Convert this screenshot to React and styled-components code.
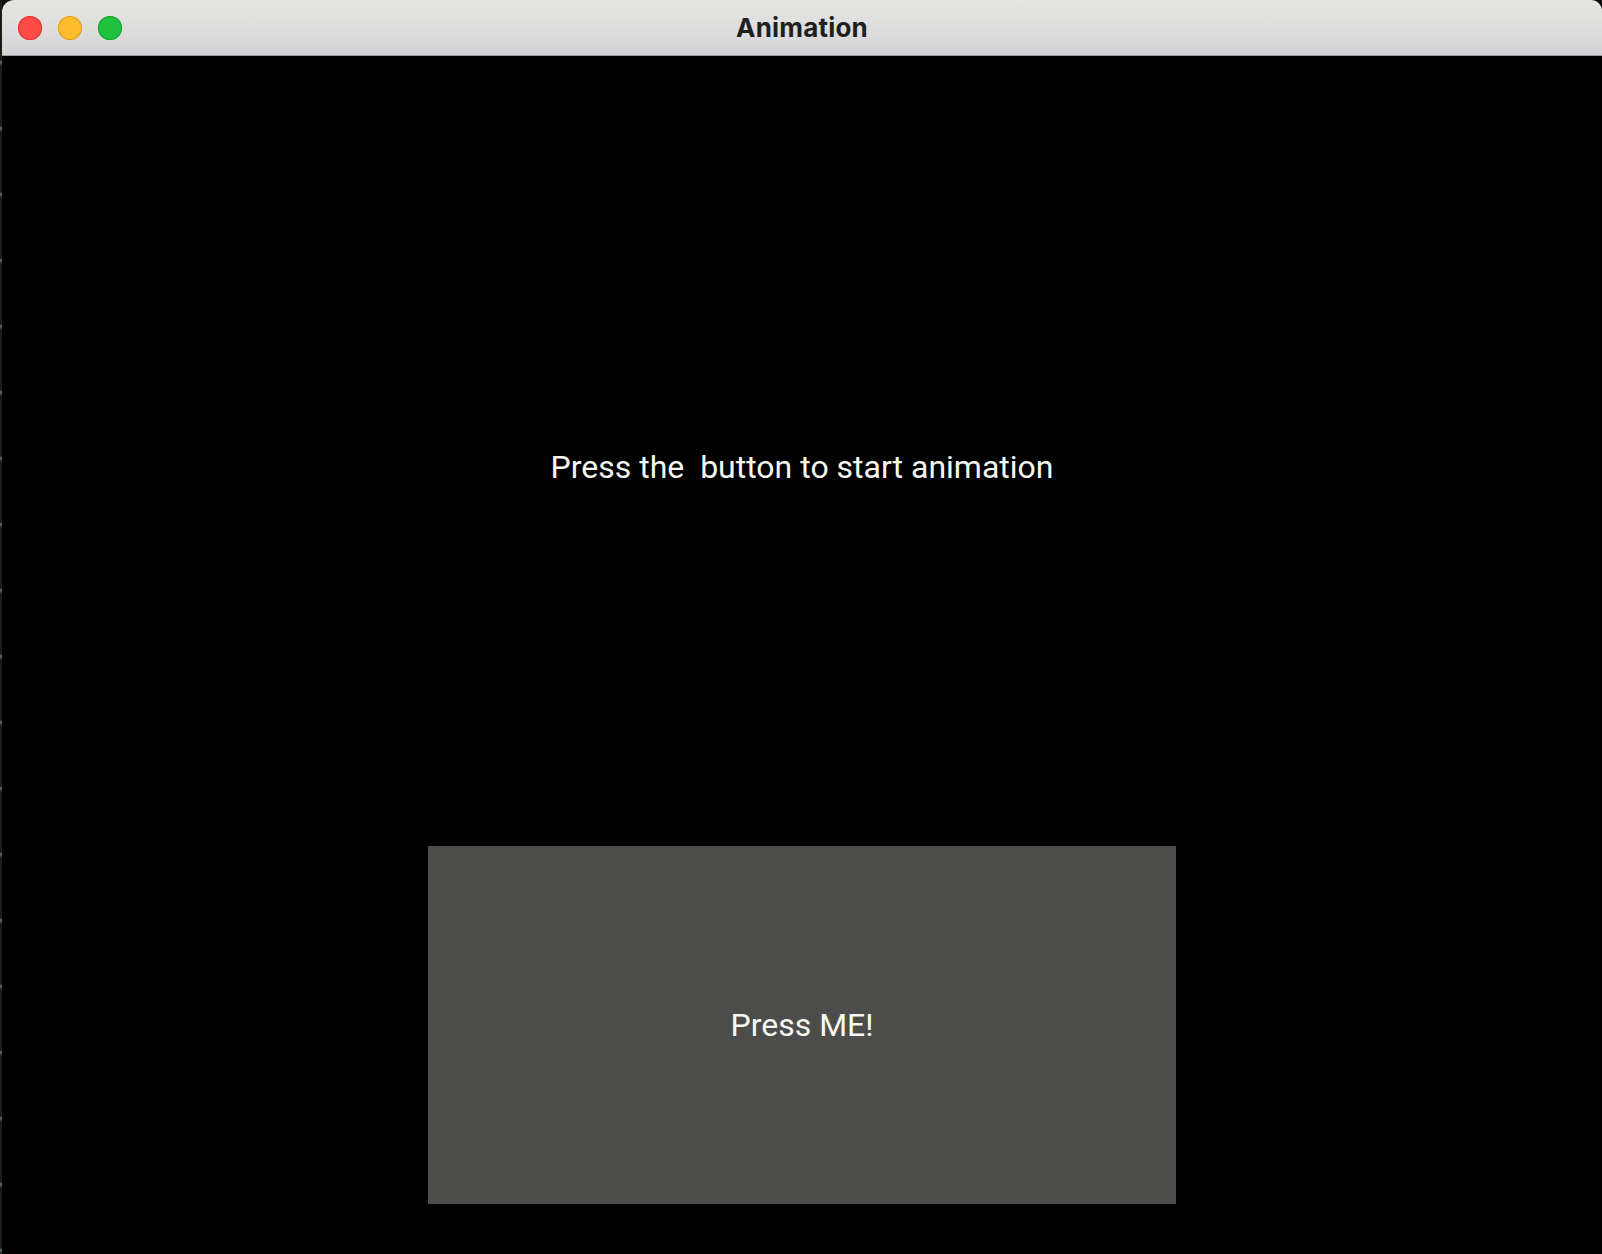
import React from 'react';
import styled, { createGlobalStyle } from 'styled-components';

const GlobalStyle = createGlobalStyle`
  html, body {
    margin: 0;
    padding: 0;
    background: #0b0b0b;
  }
  #root {
    height: 1254px;
  }
`;

const Desktop = styled.div`
  display: flex;
  width: 1602px;
  height: 1254px;
  background: #0b0b0b;
`;

const Edge = styled.div`
  width: 2px;
  flex-shrink: 0;
  background: repeating-linear-gradient(
    to bottom,
    #1a1d14 0px,
    #1a1d14 60px,
    #5a7184 62px,
    #1a1d14 66px
  );
`;

const Window = styled.div`
  flex: 1;
  display: flex;
  flex-direction: column;
  border-radius: 12px 11px 0 0;
  overflow: hidden;
  background: #000;
`;

const TitleBar = styled.div`
  height: 55px;
  flex-shrink: 0;
  display: grid;
  grid-template-columns: 1fr auto 1fr;
  align-items: center;
  padding: 0 16px;
  background: linear-gradient(to bottom, #e6e5e0 0%, #dcdcdc 60%, #d2d2d6 100%);
  border-bottom: 1px solid #9c9ca6;
`;

const Lights = styled.div`
  display: flex;
  gap: 16px;
`;

const Light = styled.span`
  width: 24px;
  height: 24px;
  border-radius: 50%;
  background: ${(props) => props.color};
  box-shadow: inset 0 0 0 1px ${(props) => props.rim};
`;

const Title = styled.div`
  font-family: Inter, 'Liberation Sans', sans-serif;
  font-weight: 700;
  font-size: 26px;
  color: #1f1f1f;
  letter-spacing: 0.2px;
`;

const Content = styled.div`
  flex: 1;
  display: flex;
  flex-direction: column;
  align-items: center;
  background: #000;
`;

const Message = styled.div`
  margin-top: 391px;
  height: 40px;
  line-height: 40px;
  font-family: Roboto, 'Liberation Sans', sans-serif;
  font-size: 32px;
  color: #f7f7f2;
  white-space: pre;
`;

const PressButton = styled.button`
  margin-top: 359px;
  width: 748px;
  height: 358px;
  border: none;
  padding: 0;
  background: #4c4c4b;
  font-family: Roboto, 'Liberation Sans', sans-serif;
  font-size: 32px;
  color: #f7f7f2;
  cursor: pointer;
`;

function App() {
  return (
    <>
      <GlobalStyle />
      <Desktop>
        <Edge />
        <Window>
          <TitleBar>
            <Lights>
              <Light color='#fe4b43' rim='#e0362f' />
              <Light color='#febb2b' rim='#e09e1c' />
              <Light color='#1fc23a' rim='#17a52c' />
            </Lights>
            <Title>Animation</Title>
            <div />
          </TitleBar>
          <Content>
            <Message>{'Press the  button to start animation'}</Message>
            <PressButton>Press ME!</PressButton>
          </Content>
        </Window>
      </Desktop>
    </>
  );
}

export default App;
